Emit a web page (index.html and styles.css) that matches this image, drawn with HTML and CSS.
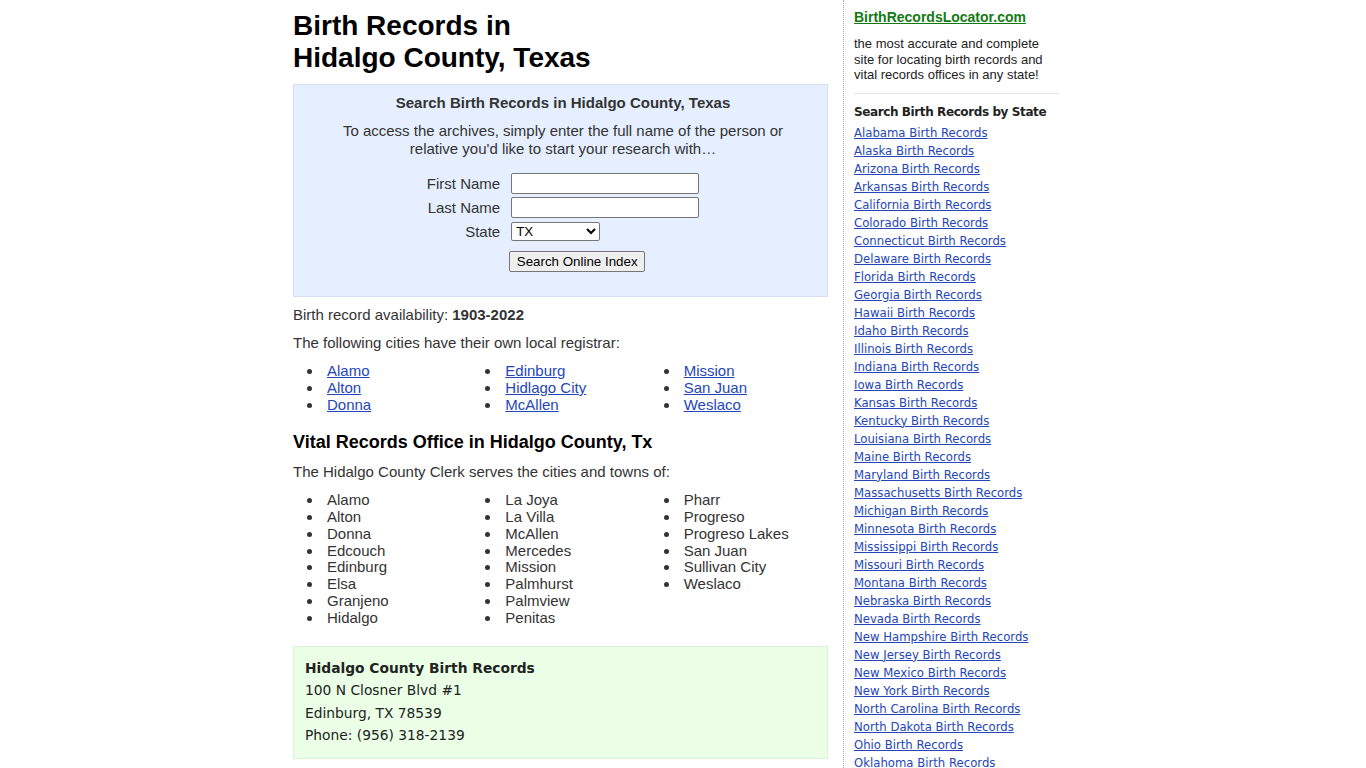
FILE: index.html
```html
<!DOCTYPE html>
<html>
    <head>
        <title>Birth Records in Hidalgo County, Texas</title>
        <meta name='viewport' content='width=device-width, initial-scale=1.0'>
        <link rel="stylesheet" href="styles.css">
    </head>
    <body>
        <div class='wrapper'>
            <div class='main'>
                <h1>Birth Records in<br>Hidalgo County, Texas</h1>

                <div class='searchBox'>
                    <h3>Search Birth Records in Hidalgo County, Texas</h3>
                    <p>To access the archives, simply enter the full name of the person or relative you'd like to start your research with…</p>
                    <table class='searchForm'>
                        <tr>
                            <td class='right'>First Name</td>
                            <td class='left'><input type='text' class='textInput' name='fname'></td>
                        </tr>
                        <tr>
                            <td class='right'>Last Name</td>
                            <td class='left'><input type='text' class='textInput' name='lname'></td>
                        </tr>
                        <tr>
                            <td class='right'>State</td>
                            <td class='left'>
                                <select name='state' class='stateSelect'>
                                    <option>TX</option>
                                </select>
                            </td>
                        </tr>
                        <tr class='buttonRow'>
                            <td></td>
                            <td class='left'><input type='submit' class='button' value='Search Online Index'></td>
                        </tr>
                    </table>
                </div>

                <p class='line'>Birth record availability: <b>1903-2022</b></p>
                <p class='line'>The following cities have their own local registrar:</p>
                <ul class='cityList'>
                    <li><a href='#'>Alamo</a></li>
                    <li><a href='#'>Edinburg</a></li>
                    <li><a href='#'>Mission</a></li>
                    <li><a href='#'>Alton</a></li>
                    <li><a href='#'>Hidlago City</a></li>
                    <li><a href='#'>San Juan</a></li>
                    <li><a href='#'>Donna</a></li>
                    <li><a href='#'>McAllen</a></li>
                    <li><a href='#'>Weslaco</a></li>
                </ul>

                <h2>Vital Records Office in Hidalgo County, Tx</h2>
                <p class='line'>The Hidalgo County Clerk serves the cities and towns of:</p>
                <div class='townCols'>
                    <ul>
                        <li>Alamo</li>
                        <li>Alton</li>
                        <li>Donna</li>
                        <li>Edcouch</li>
                        <li>Edinburg</li>
                        <li>Elsa</li>
                        <li>Granjeno</li>
                        <li>Hidalgo</li>
                    </ul>
                    <ul>
                        <li>La Joya</li>
                        <li>La Villa</li>
                        <li>McAllen</li>
                        <li>Mercedes</li>
                        <li>Mission</li>
                        <li>Palmhurst</li>
                        <li>Palmview</li>
                        <li>Penitas</li>
                    </ul>
                    <ul>
                        <li>Pharr</li>
                        <li>Progreso</li>
                        <li>Progreso Lakes</li>
                        <li>San Juan</li>
                        <li>Sullivan City</li>
                        <li>Weslaco</li>
                    </ul>
                </div>

                <div class='officeBox'>
                    <b>Hidalgo County Birth Records</b><br>
                    100 N Closner Blvd #1<br>
                    Edinburg, TX 78539<br>
                    Phone: (956) 318-2139
                </div>
            </div>

            <div class='sidebar'>
                <a href='#' class='siteName'>BirthRecordsLocator.com</a>
                <p class='tagline'>the most accurate and complete site for locating birth records and vital records offices in any state!</p>
                <h4>Search Birth Records by State</h4>
                <ul class='stateList'>
                    <li><a href='#'>Alabama Birth Records</a></li>
                    <li><a href='#'>Alaska Birth Records</a></li>
                    <li><a href='#'>Arizona Birth Records</a></li>
                    <li><a href='#'>Arkansas Birth Records</a></li>
                    <li><a href='#'>California Birth Records</a></li>
                    <li><a href='#'>Colorado Birth Records</a></li>
                    <li><a href='#'>Connecticut Birth Records</a></li>
                    <li><a href='#'>Delaware Birth Records</a></li>
                    <li><a href='#'>Florida Birth Records</a></li>
                    <li><a href='#'>Georgia Birth Records</a></li>
                    <li><a href='#'>Hawaii Birth Records</a></li>
                    <li><a href='#'>Idaho Birth Records</a></li>
                    <li><a href='#'>Illinois Birth Records</a></li>
                    <li><a href='#'>Indiana Birth Records</a></li>
                    <li><a href='#'>Iowa Birth Records</a></li>
                    <li><a href='#'>Kansas Birth Records</a></li>
                    <li><a href='#'>Kentucky Birth Records</a></li>
                    <li><a href='#'>Louisiana Birth Records</a></li>
                    <li><a href='#'>Maine Birth Records</a></li>
                    <li><a href='#'>Maryland Birth Records</a></li>
                    <li><a href='#'>Massachusetts Birth Records</a></li>
                    <li><a href='#'>Michigan Birth Records</a></li>
                    <li><a href='#'>Minnesota Birth Records</a></li>
                    <li><a href='#'>Mississippi Birth Records</a></li>
                    <li><a href='#'>Missouri Birth Records</a></li>
                    <li><a href='#'>Montana Birth Records</a></li>
                    <li><a href='#'>Nebraska Birth Records</a></li>
                    <li><a href='#'>Nevada Birth Records</a></li>
                    <li><a href='#'>New Hampshire Birth Records</a></li>
                    <li><a href='#'>New Jersey Birth Records</a></li>
                    <li><a href='#'>New Mexico Birth Records</a></li>
                    <li><a href='#'>New York Birth Records</a></li>
                    <li><a href='#'>North Carolina Birth Records</a></li>
                    <li><a href='#'>North Dakota Birth Records</a></li>
                    <li><a href='#'>Ohio Birth Records</a></li>
                    <li><a href='#'>Oklahoma Birth Records</a></li>
                </ul>
            </div>
        </div>
    </body>
</html>
```

FILE: styles.css
```css
* {
    margin: 0;
    padding: 0;
}

body {
    background: white;
    color: #333;
    font-family: "Liberation Sans", Arial, sans-serif;
    font-size: 15px;
}

a {
    color: #2546b8;
}

.wrapper {
    width: 780px;
    height: 768px;
    overflow: hidden;
    margin: 0 auto;
    display: flex;
    align-items: flex-start;
}

.main {
    width: 535px;
    padding-top: 10px;
}

h1 {
    color: black;
    font-size: 28px;
    line-height: 32px;
    margin-bottom: 10px;
}

h2 {
    color: black;
    font-size: 18px;
    line-height: 22px;
    margin: 18px 0 8px 0;
}

.searchBox {
    background: #e5efff;
    border: 1px solid #d3e0f2;
    text-align: center;
    padding: 9px 15px 24px 20px;
}

.searchBox > h3 {
    font-size: 15px;
    line-height: 18px;
    margin-bottom: 10px;
}

.searchBox > p {
    line-height: 18px;
    margin-bottom: 13px;
    padding: 0 25px;
}

.searchForm {
    margin: 0 auto;
    border-spacing: 0;
}

.searchForm td {
    height: 24px;
    padding: 0;
}

.searchForm .buttonRow td {
    height: auto;
    padding-top: 8px;
}

.right {
    text-align: right;
    padding-right: 11px !important;
}

.left {
    text-align: left;
}

.textInput {
    width: 188px;
    height: 21px;
    box-sizing: border-box;
    border: 1px solid #767676;
    border-radius: 2px;
    font-size: 13.33px;
    padding: 1px 3px;
    vertical-align: middle;
}

.stateSelect {
    width: 89px;
    height: 19px;
    font-size: 13.33px;
    font-family: "Liberation Sans", Arial, sans-serif;
    border: 1px solid #767676;
    border-radius: 2px;
    vertical-align: middle;
    background: white;
    color: black;
}

.button {
    margin-left: -2px;
    font-family: "Liberation Sans", Arial, sans-serif;
    font-size: 13.33px;
    padding: 1px 6px;
    width: 136px;
    height: 21px;
    background: #efefef;
    border: 1px solid #767676;
    border-radius: 2px;
    color: black;
    vertical-align: top;
}

.line {
    line-height: 18px;
    margin-top: 10px;
}

.searchBox + .line {
    margin-top: 9px;
}

ul {
    list-style: disc;
}

.cityList,
.townCols {
    display: grid;
    grid-template-columns: repeat(3, 1fr);
    margin-top: 10px;
    line-height: 17px;
}

.townCols {
    margin-top: 11px;
    line-height: 16.86px;
}

.cityList > li,
.townCols li {
    margin-left: 30px;
    padding-left: 4px;
}

.officeBox {
    margin-top: 19px;
    background: #eaffe6;
    border: 1px solid #dcf2d8;
    padding: 10px 11px 11px 11px;
    font-family: "DejaVu Sans", Verdana, sans-serif;
    font-size: 13.8px;
    line-height: 22.5px;
    color: #222;
}

.sidebar {
    width: 205px;
    margin-left: 15px;
    border-left: 1px dotted #aaa;
    padding: 8px 0 0 10px;
    min-height: 768px;
}

.siteName {
    display: block;
    color: #137a13;
    font-weight: bold;
    font-size: 14px;
    line-height: 18px;
}

.tagline {
    font-size: 13px;
    line-height: 15.5px;
    margin-top: 10px;
    padding-bottom: 10px;
    border-bottom: 1px solid #e6e6e6;
    color: #222;
}

.sidebar > h4 {
    font-family: "DejaVu Sans", Verdana, sans-serif;
    font-size: 12px;
    letter-spacing: -0.4px;
    line-height: 18px;
    margin-top: 9px;
    color: #222;
}

.stateList {
    list-style: none;
    margin-top: 3px;
}

.stateList li {
    font-family: "DejaVu Sans", Verdana, sans-serif;
    font-size: 11.7px;
    line-height: 18px;
}
```
